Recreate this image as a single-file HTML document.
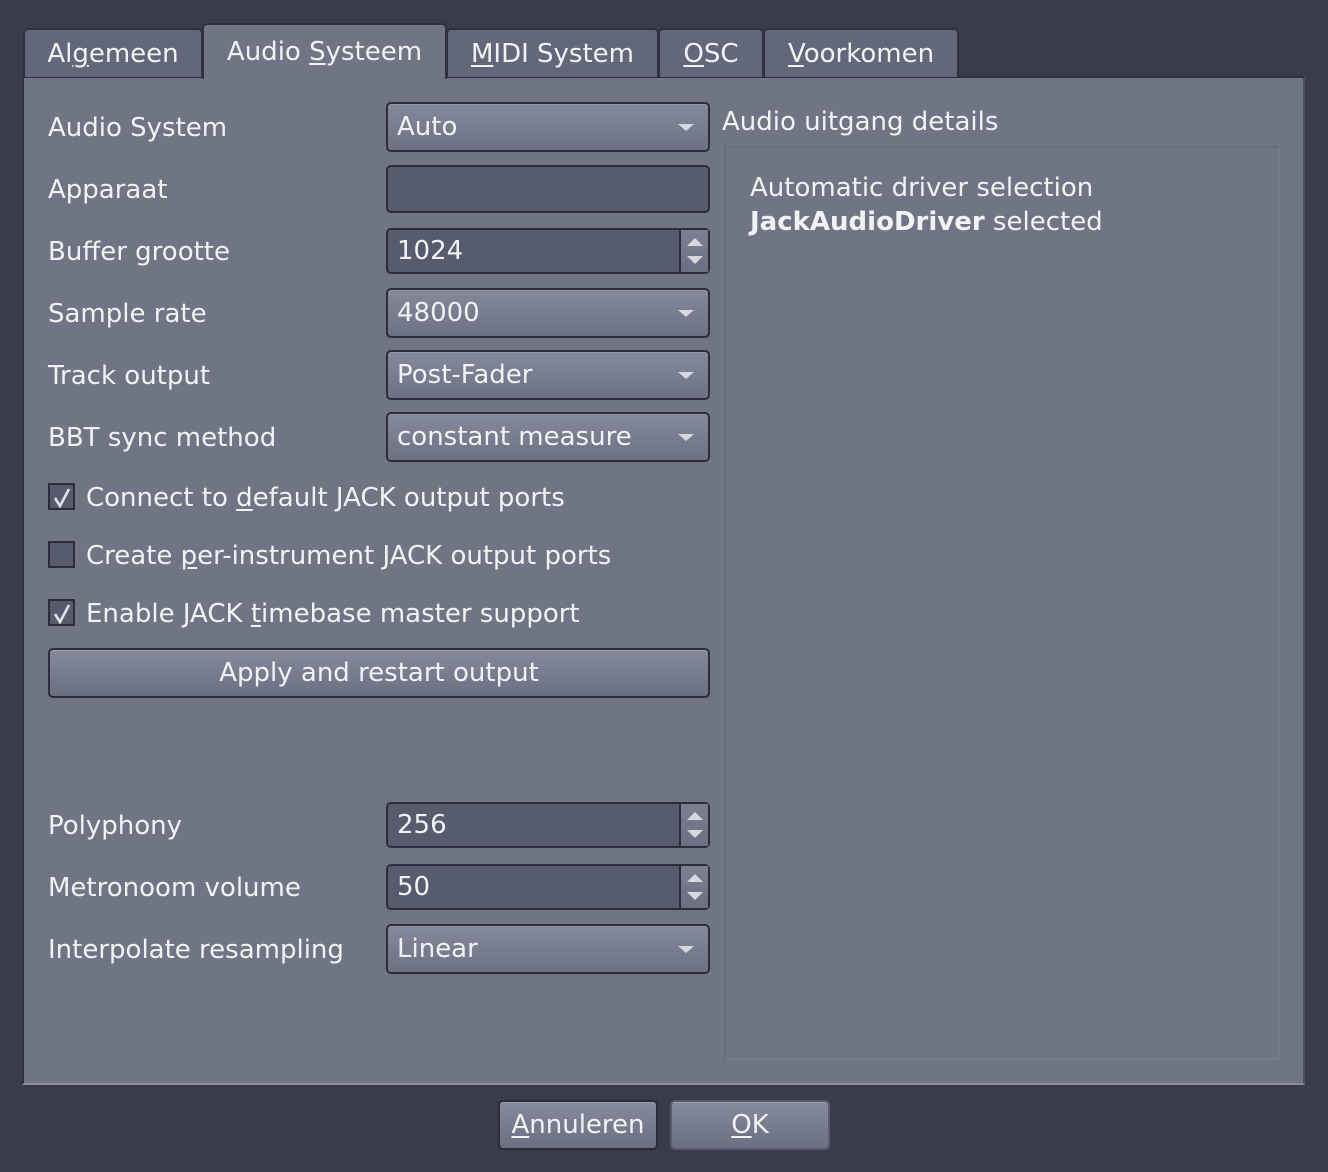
<!DOCTYPE html>
<html><head><meta charset="utf-8"><style>
*{box-sizing:border-box;margin:0;padding:0}
body{width:1328px;height:1172px;background:#393d49;font-family:"DejaVu Sans","Liberation Sans",sans-serif;font-size:26px;color:#f2f2f4;position:relative;overflow:hidden}
.a{position:absolute}
.tab{position:absolute;top:28px;height:49px;border:2px solid #2e3240;border-bottom:none;border-radius:5px 5px 0 0;background:#62687a;line-height:48px;text-align:center}
.tab.sel{top:23px;height:56px;background:#6f7585;border-color:#2e3240;line-height:54px;z-index:2;border-bottom:none}
u{text-decoration:underline;text-decoration-thickness:2px;text-underline-offset:3px}
.panel{left:22px;top:76px;width:1283px;height:1009px;background:#6f7585;border:2px solid #2e3240;border-bottom-color:#8a8f9d;border-right-color:#4a4f5d}
.lbl{position:absolute;left:48px}
.combo{position:absolute;left:386px;width:324px;height:50px;border:2px solid #2a2e3a;border-radius:5px;background:linear-gradient(#848a9b,#6c7283);padding-left:9px;line-height:46px;box-shadow:inset 0 1px 0 #9096a5}
.combo:after{content:"";position:absolute;right:14px;top:20px;border-left:8px solid transparent;border-right:8px solid transparent;border-top:7px solid #d6d8de}
.inp{position:absolute;left:386px;width:324px;height:48px;border:2px solid #2a2e3a;border-radius:5px;background:#565b6e;padding-left:9px;line-height:42px}
.spin{position:absolute;right:0;top:0;width:29px;height:100%;border-left:2px solid #2a2e3a;background:linear-gradient(#7b8192,#6a7082)}
.spin:before{content:"";position:absolute;left:6px;top:8px;border-left:8px solid transparent;border-right:8px solid transparent;border-bottom:8px solid #d6d8de}
.spin:after{content:"";position:absolute;left:6px;bottom:8px;border-left:8px solid transparent;border-right:8px solid transparent;border-top:8px solid #d6d8de}
.cb{position:absolute;left:48px;width:27px;height:27px;border:2px solid #2a2e3a;background:#565b6e}
.cb svg{position:absolute;left:3px;top:2px}
.btn{position:absolute;border:2px solid #2a2e3a;border-radius:5px;background:linear-gradient(#858b9c,#6a7082);text-align:center;box-shadow:inset 0 1px 0 #9aa0ae}
</style></head><body>
<div class="a panel"></div>
<div class="tab" style="left:23px;width:180px">Al<u>g</u>emeen</div>
<div class="tab sel" style="left:202px;width:245px">Audio <u>S</u>ysteem</div>
<div class="tab" style="left:446px;width:213px"><u>M</u>IDI System</div>
<div class="tab" style="left:658px;width:106px"><u>O</u>SC</div>
<div class="tab" style="left:763px;width:196px"><u>V</u>oorkomen</div>

<div class="lbl" style="top:113px">Audio System</div>
<div class="combo" style="top:102px">Auto</div>
<div class="lbl" style="top:175px">Apparaat</div>
<div class="inp" style="top:165px"></div>
<div class="lbl" style="top:237px">Buffer grootte</div>
<div class="inp" style="top:228px;height:46px">1024<div class="spin"></div></div>
<div class="lbl" style="top:299px">Sample rate</div>
<div class="combo" style="top:288px">48000</div>
<div class="lbl" style="top:361px">Track output</div>
<div class="combo" style="top:350px">Post-Fader</div>
<div class="lbl" style="top:423px">BBT sync method</div>
<div class="combo" style="top:412px">constant measure</div>

<div class="cb" style="top:483px"><svg width="19" height="21" viewBox="0 0 19 21"><path d="M2 11 L7 19 L16 2" fill="none" stroke="#dfe1e6" stroke-width="2.6"/></svg></div>
<div class="a" style="left:86px;top:483px">Connect to <u>d</u>efault JACK output ports</div>
<div class="cb" style="top:541px"></div>
<div class="a" style="left:86px;top:541px">Create <u>p</u>er-instrument JACK output ports</div>
<div class="cb" style="top:599px"><svg width="19" height="21" viewBox="0 0 19 21"><path d="M2 11 L7 19 L16 2" fill="none" stroke="#dfe1e6" stroke-width="2.6"/></svg></div>
<div class="a" style="left:86px;top:599px">Enable JACK <u>t</u>imebase master support</div>
<div class="btn" style="left:48px;top:648px;width:662px;height:50px;line-height:47px">Apply and restart output</div>

<div class="lbl" style="top:811px">Polyphony</div>
<div class="inp" style="top:802px;height:46px">256<div class="spin"></div></div>
<div class="lbl" style="top:873px">Metronoom volume</div>
<div class="inp" style="top:864px;height:46px">50<div class="spin"></div></div>
<div class="lbl" style="top:935px">Interpolate resampling</div>
<div class="combo" style="top:924px">Linear</div>

<div class="a" style="left:722px;top:107px">Audio uitgang details</div>
<div class="a" style="left:724px;top:146px;width:556px;height:914px;border:2px solid #686e7e;border-right-color:#767c8b;border-bottom-color:#767c8b"></div>
<div class="a" style="left:750px;top:171px;line-height:34px">Automatic driver selection<br><b>JackAudioDriver</b> selected</div>

<div class="btn" style="left:498px;top:1100px;width:160px;height:50px;line-height:46px"><u>A</u>nnuleren</div>
<div class="btn" style="left:670px;top:1100px;width:160px;height:50px;line-height:46px;border-color:#565b6d"><u>O</u>K</div>
</body></html>
